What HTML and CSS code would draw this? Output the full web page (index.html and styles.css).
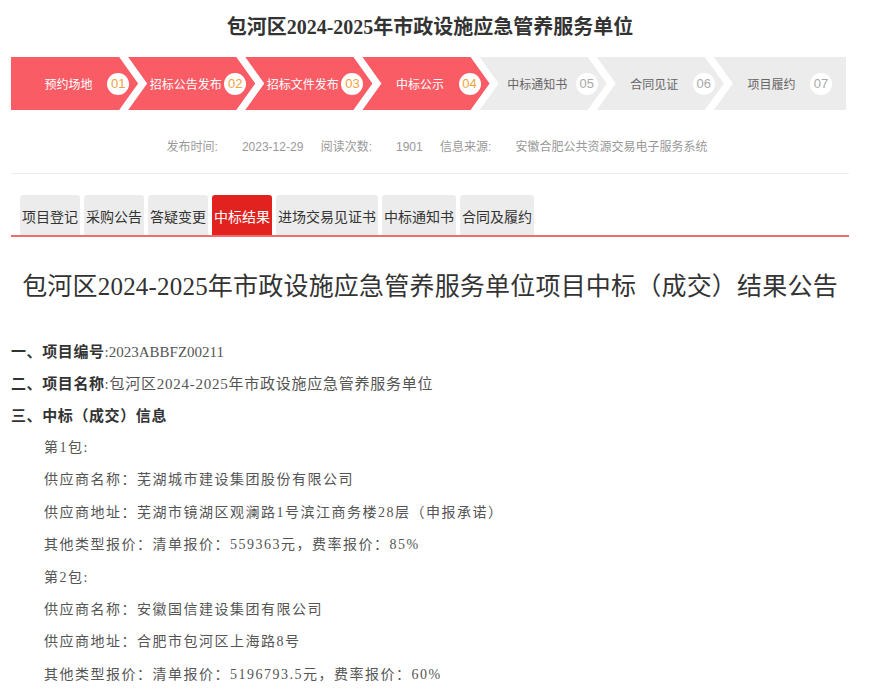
FILE: index.html
```html
<!DOCTYPE html>
<html lang="zh-CN">
<head>
    <meta charset="UTF-8">
    <meta name="viewport" content="width=device-width, initial-scale=1.0">
    <title>包河区2024-2025年市政设施应急管养服务单位</title>
    <link rel="stylesheet" href="styles.css">
</head>
<body>
    <div class="wrap">
        <h1 class="title">包河区2024-2025年市政设施应急管养服务单位</h1>

        <div class="steps">
            <div class="step on"><span class="step-name">预约场地</span><span class="step-no">01</span></div>
            <div class="step on"><span class="step-name">招标公告发布</span><span class="step-no">02</span></div>
            <div class="step on"><span class="step-name">招标文件发布</span><span class="step-no">03</span></div>
            <div class="step on"><span class="step-name">中标公示</span><span class="step-no">04</span></div>
            <div class="step"><span class="step-name">中标通知书</span><span class="step-no">05</span></div>
            <div class="step"><span class="step-name">合同见证</span><span class="step-no">06</span></div>
            <div class="step"><span class="step-name">项目履约</span><span class="step-no">07</span></div>
        </div>

        <div class="meta">
            <span class="meta-label">发布时间:</span><span class="meta-value">2023-12-29</span>
            <span class="meta-label">阅读次数:</span><span class="meta-value">1901</span>
            <span class="meta-label">信息来源:</span><span class="meta-value">安徽合肥公共资源交易电子服务系统</span>
        </div>

        <div class="tabs">
            <a class="tab">项目登记</a>
            <a class="tab">采购公告</a>
            <a class="tab">答疑变更</a>
            <a class="tab active">中标结果</a>
            <a class="tab">进场交易见证书</a>
            <a class="tab">中标通知书</a>
            <a class="tab">合同及履约</a>
        </div>

        <h2 class="notice-title">包河区2024-2025年市政设施应急管养服务单位项目中标（成交）结果公告</h2>

        <div class="content">
            <p class="item"><b>一、项目编号</b><span class="code">:2023ABBFZ00211</span></p>
            <p class="item"><b>二、项目名称</b><span class="code wide">:包河区2024-2025年市政设施应急管养服务单位</span></p>
            <p class="item"><b>三、中标（成交）信息</b></p>
            <p class="sub">第1包:</p>
            <p class="sub">供应商名称：芜湖城市建设集团股份有限公司</p>
            <p class="sub">供应商地址：芜湖市镜湖区观澜路1号滨江商务楼28层（申报承诺）</p>
            <p class="sub">其他类型报价：清单报价：559363元，费率报价：85%</p>
            <p class="sub">第2包:</p>
            <p class="sub">供应商名称：安徽国信建设集团有限公司</p>
            <p class="sub">供应商地址：合肥市包河区上海路8号</p>
            <p class="sub">其他类型报价：清单报价：5196793.5元，费率报价：60%</p>
        </div>
    </div>
</body>
</html>
```

FILE: styles.css
```css
body {
    margin: 0;
    font-family: Arial, "Liberation Sans", "Noto Sans CJK SC", sans-serif;
    color: #333;
    background: #fff;
}
.wrap {
    width: 838px;
    margin-left: 11px;
}
.title {
    margin: 0;
    padding-top: 12px;
    font-family: "Liberation Serif", "Noto Sans CJK SC", serif;
    font-size: 20px;
    line-height: 30px;
    font-weight: bold;
    color: #333;
    text-align: center;
}

/* progress steps */
.steps {
    display: flex;
    width: 835px;
    height: 53px;
    margin-top: 15px;
}
.step {
    flex: 1;
    min-width: 0;
    margin-left: -10px;
    display: flex;
    align-items: center;
    padding: 0 9px 0 19px;
    background: #ececec;
    color: #666;
    font-size: 12px;
    clip-path: polygon(0 0, calc(100% - 19px) 0, 100% 50%, calc(100% - 19px) 100%, 0 100%, 19px 50%);
}
.step:first-child {
    margin-left: 0;
    clip-path: polygon(0 0, calc(100% - 19px) 0, 100% 50%, calc(100% - 19px) 100%, 0 100%);
}
.step:last-child {
    padding-right: 14px;
    clip-path: polygon(0 0, 100% 0, 100% 100%, 0 100%, 19px 50%);
}
.step.on {
    background: #fa5c66;
    color: #fff;
}
.step-name {
    flex: 1;
    text-align: center;
    white-space: nowrap;
}
.step-no {
    width: 22px;
    height: 22px;
    border-radius: 50%;
    background: #fff;
    color: #a9a9a9;
    font-size: 13px;
    line-height: 22px;
    text-align: center;
}
.step.on .step-no {
    color: #f0a23c;
}

/* info line */
.meta {
    margin-top: 27px;
    padding-left: 14px;
    padding-bottom: 16px;
    border-bottom: 1px solid #ececec;
    text-align: center;
    font-size: 12px;
    line-height: 20px;
    color: #999;
}
.meta-label {
    margin-right: 24px;
}
.meta-value {
    margin-right: 14px;
}
.meta-value:last-child {
    margin-right: 0;
}

/* tabs */
.tabs {
    display: flex;
    gap: 4px;
    margin-top: 21px;
    padding-left: 9px;
    border-bottom: 2px solid #ec6f6f;
}
.tab {
    display: flex;
    align-items: center;
    height: 40px;
    padding: 2px 2px 0;
    box-sizing: border-box;
    background: #ececec;
    border-radius: 3px 3px 0 0;
    font-size: 14px;
    color: #333;
    cursor: pointer;
}
.tab.active {
    background: #e1221f;
    color: #fff;
}

.notice-title {
    margin: 30px 0 0;
    font-family: "Liberation Serif", "Noto Sans CJK SC", serif;
    font-size: 25px;
    line-height: 40px;
    font-weight: normal;
    color: #333;
    text-align: center;
    white-space: nowrap;
    letter-spacing: 0.2px;
}

/* notice body */
.content {
    margin-top: 29px;
}
.content p {
    margin: 0;
    line-height: 32px;
    white-space: nowrap;
}
.item b {
    font-size: 15px;
    letter-spacing: 0.6px;
    color: #333;
}
.code {
    font-family: "Liberation Serif", "Noto Sans CJK SC", serif;
    font-size: 15px;
    color: #555;
}
.code.wide {
    letter-spacing: 0.75px;
}
.content .sub {
    padding-left: 33px;
    font-family: "Liberation Serif", "Noto Sans CJK SC", serif;
    font-size: 14px;
    line-height: 32.4px;
    letter-spacing: 1.5px;
    color: #555;
}
```
